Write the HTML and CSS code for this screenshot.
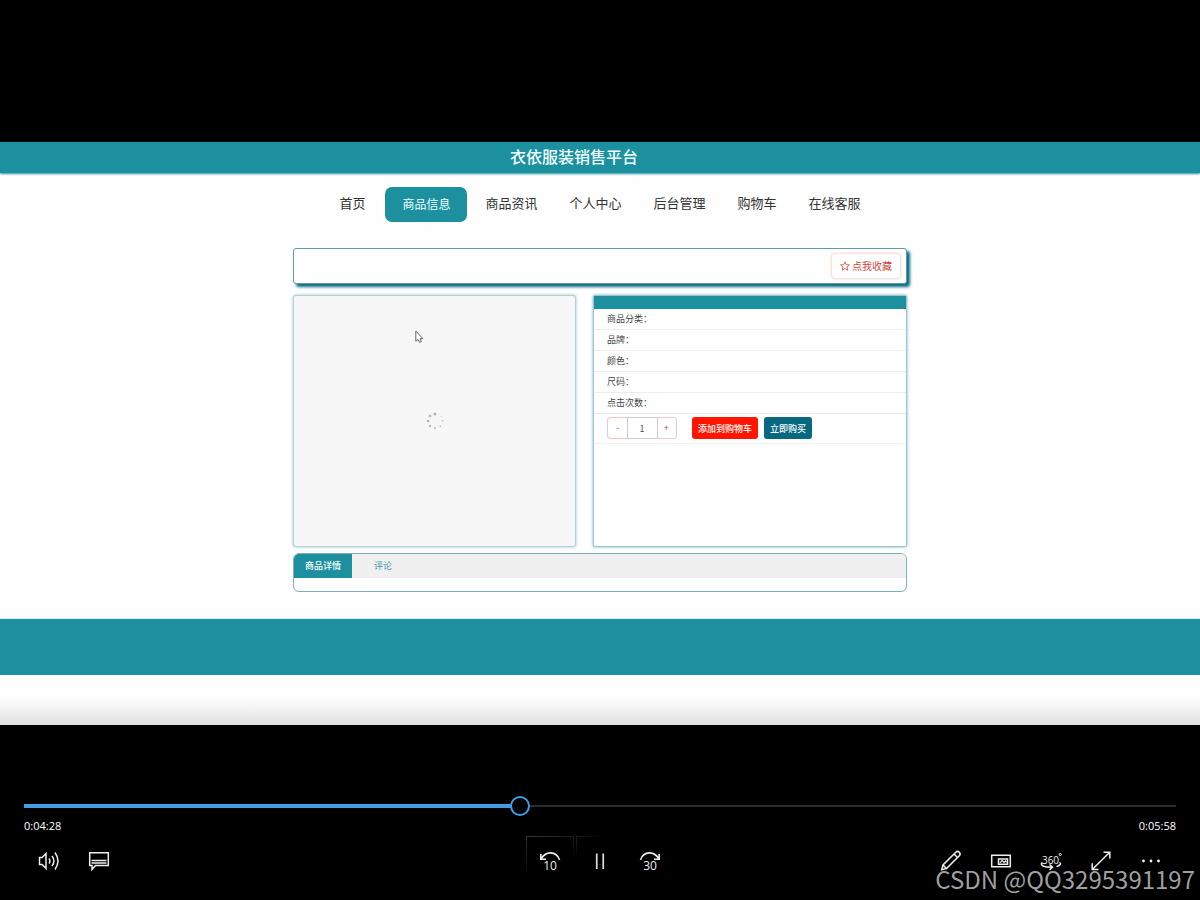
FILE: index.html
```html
<!DOCTYPE html>
<html lang="zh-CN">
<head>
<meta charset="utf-8">
<title>衣依服装销售平台</title>
<link rel="stylesheet" href="styles.css">
</head>
<body>
<main class="video">
  <header class="banner"><h1 class="banner-title">衣依服装销售平台</h1></header>
  <nav class="nav">
    <a class="nav-link" href="#">首页</a>
    <a class="nav-link nav-active" href="#">商品信息</a>
    <a class="nav-link" href="#">商品资讯</a>
    <a class="nav-link" href="#">个人中心</a>
    <a class="nav-link" href="#">后台管理</a>
    <a class="nav-link" href="#">购物车</a>
    <a class="nav-link" href="#">在线客服</a>
  </nav>
  <div class="container">
    <section class="title-bar">
      <button class="favorite" type="button">
        <svg class="star" viewBox="0 0 12 12" width="10" height="10"><path d="M6 .9 7.5 4.4 11.3 4.7 8.4 7.2 9.3 11 6 9 2.7 11 3.6 7.2 .7 4.7 4.5 4.4Z" fill="none" stroke="currentColor" stroke-width="1"/></svg>点我收藏
      </button>
    </section>
    <div class="product">
      <section class="gallery">
        <svg class="spinner" viewBox="0 0 18 18" width="18" height="18" fill="#b4b4b4">
          <circle cx="9" cy="2" r="1.5"/><circle cx="4" cy="4.1" r="1.4"/><circle cx="2" cy="9" r="1.3"/><circle cx="4" cy="14" r="1.2"/><circle cx="9" cy="16" r="1"/><circle cx="14.3" cy="14.2" r=".8"/><circle cx="16.6" cy="9" r=".7"/><circle cx="15" cy="4.4" r=".5"/>
        </svg>
        <svg class="cursor" viewBox="0 0 9 14" width="9" height="14"><path d="M.8 1v10.3l2.3-1.9L4.5 12.4 6.3 11.7 5.1 8.7H7.9Z" fill="#fff" stroke="#555" stroke-width=".9"/></svg>
      </section>
      <section class="info">
        <div class="info-head"></div>
        <div class="info-row">商品分类：</div>
        <div class="info-row">品牌：</div>
        <div class="info-row">颜色：</div>
        <div class="info-row">尺码：</div>
        <div class="info-row">点击次数：</div>
        <div class="buy-row">
          <div class="stepper">
            <button class="step" type="button">-</button>
            <input class="quantity" type="text" value="1" aria-label="数量">
            <button class="step" type="button">+</button>
          </div>
          <button class="action add-cart" type="button">添加到购物车</button>
          <button class="action buy-now" type="button">立即购买</button>
        </div>
      </section>
    </div>
    <section class="details">
      <div class="tabs">
        <button class="tab tab-active" type="button">商品详情</button>
        <button class="tab" type="button">评论</button>
      </div>
    </section>
  </div>
  <footer class="footer"></footer>
  <div class="fade"></div>
</main>
<section class="player">
  <input class="seek" type="range" min="0" max="1000" value="429" aria-label="播放进度">
  <div class="times"><span>0:04:28</span><span>0:05:58</span></div>
  <div class="controls">
    <div class="group">
      <button class="control" type="button" aria-label="音量">
        <svg viewBox="0 0 24 24" width="24" height="24" fill="none" stroke="#eee" stroke-width="1.5"><path d="M2.500 9.500H5L9 5.500V20.500L5 16.500H2.500Z"/><path d="M12 10.500q1.800 2.500 0 5M15 8q3.800 5 0 10M18 4.500q6 8.500 0 17"/></svg>
      </button>
      <button class="control" type="button" aria-label="字幕">
        <svg viewBox="0 0 24 24" width="24" height="24" fill="none" stroke="#eee" stroke-width="1.5"><path d="M2.700 4.700H21.300V17.500H8.500L5 21.500V17.500H2.700Z"/><path d="M4.500 12.500H19.500M4.500 15H19.500"/></svg>
      </button>
    </div>
    <div class="group">
      <button class="control outlined" type="button" aria-label="后退10秒">
        <svg viewBox="0 0 24 24" width="24" height="24" fill="none" stroke="#eee" stroke-width="1.600"><path d="M2.800 6V11.200H8M3 10.900Q7 4.800 12.500 4.900Q19.500 5.200 21.500 12"/><text class="skip-text" x="12" y="22">10</text></svg>
      </button>
      <button class="control outlined-faint" type="button" aria-label="暂停">
        <svg viewBox="0 0 24 24" width="24" height="24" fill="none" stroke="#ddd" stroke-width="1.700"><path d="M8.750 5.500V21M15.250 5.500V21"/></svg>
      </button>
      <button class="control" type="button" aria-label="前进30秒">
        <svg viewBox="0 0 24 24" width="24" height="24" fill="none" stroke="#eee" stroke-width="1.600"><path d="M21.200 6V11.200H16M21 10.900Q17 4.800 11.500 4.900Q4.500 5.200 2.500 12"/><text class="skip-text" x="12" y="22">30</text></svg>
      </button>
    </div>
    <div class="group group-end">
      <button class="control" type="button" aria-label="编辑">
        <svg viewBox="0 0 24 24" width="24" height="24" fill="none" stroke="#eee" stroke-width="1.500"><path d="M2.700 21.800 4 17 16.800 4.200Q18.500 2.500 20.300 4.200Q22 6 20.300 7.700L7.500 20.500ZM4 17 7.500 20.500M15 6 18.500 9.500"/></svg>
      </button>
      <button class="control" type="button" aria-label="迷你视图">
        <svg viewBox="0 0 24 24" width="24" height="24" fill="none" stroke="#eee" stroke-width="1.500"><path d="M2.700 7.200H21.300V18.800H2.700Z"/><path d="M9.500 11H18.500V16.200H9.500Z"/><path stroke-width="1.200" d="M11 15 13 12.500 15 14.500 16.500 13 17.500 14.500"/></svg>
      </button>
      <button class="control" type="button" aria-label="360度">
        <svg viewBox="0 0 24 24" width="24" height="24" fill="none" stroke="#eee" stroke-width="1.500"><text class="degree-text" x="11.500" y="15.500">360</text><circle cx="21.200" cy="6.500" r="1.100" stroke-width=".9"/><path d="M3.500 14.500Q1 16 4 18Q7 19.500 13.500 19.300M10.500 16.500 13.500 19.300 10.500 22M20.500 14.500Q23.500 16.500 17.500 18.600"/></svg>
      </button>
      <button class="control" type="button" aria-label="全屏">
        <svg viewBox="0 0 24 24" width="24" height="24" fill="none" stroke="#eee" stroke-width="1.500"><path d="M3.500 21.300 20.500 4.500M14.500 4.300H20.800V10.600M3.200 15.300V21.600H9.500"/></svg>
      </button>
      <button class="control" type="button" aria-label="更多">
        <svg viewBox="0 0 24 24" width="24" height="24" fill="#eee"><circle cx="4.500" cy="13" r="1.400"/><circle cx="12" cy="13" r="1.400"/><circle cx="19.500" cy="13" r="1.400"/></svg>
      </button>
    </div>
  </div>
</section>
<div class="watermark">CSDN @QQ3295391197</div>
</body>
</html>
```

FILE: styles.css
```css
* { box-sizing: border-box; }

body {
  position: relative;
  margin: 0;
  padding-top: 142px;
  min-height: 100vh;
  background: #000;
  font-family: "Noto Sans CJK SC", sans-serif;
}

button, input { font-family: inherit; margin: 0; }

button { padding: 0; border: 0; background: none; cursor: pointer; }

.video { background: #fefefe; }

.banner {
  padding: 0 52px 2px 0;
  background: #1c909f;
  box-shadow: 0 1px 2px #1c909f;
}

.banner-title {
  margin: 0;
  color: #f0ffff;
  font-size: 16px;
  font-weight: 500;
  line-height: 29px;
  text-align: center;
}

.nav {
  display: flex;
  justify-content: center;
  padding: 14px 0 26px;
}

.nav-link {
  padding: 0 16px;
  color: #333;
  font-size: 13px;
  line-height: 32px;
}

.nav-link { text-decoration: none; }

.nav-active {
  margin: 0 2px 0 4px;
  padding: 0 17px 2px;
  border-radius: 7px;
  background: #1c909f;
  color: #f0ffff;
  font-size: 12px;
  line-height: 33px;
}

.container {
  max-width: 614px;
  margin: 0 auto;
}

.title-bar {
  display: flex;
  justify-content: flex-end;
  padding: 4px 5px;
  border: 1px solid #5f9ca6;
  border-radius: 3px;
  background: #fff;
  box-shadow: 3px 3px 3px #086a83;
}

.favorite {
  display: flex;
  align-items: center;
  gap: 2px;
  padding: 0 8px;
  border: 1px solid #fbe0de;
  border-radius: 4px;
  box-shadow: 0 0 2px #f8cbc8;
  color: #cb4a3f;
  font-size: 10px;
  line-height: 24px;
}

.product {
  display: grid;
  grid-template-columns: 283fr 314fr;
  gap: 17px;
  min-height: 252px;
  margin: 11px 0 6px;
}

.gallery {
  position: relative;
  display: flex;
  align-items: center;
  justify-content: center;
  border: 1px solid #b4d0d5;
  border-radius: 3px;
  background: #f7f7f7;
  box-shadow: 0 0 3px #8fc3cb;
}

.cursor {
  position: absolute;
  top: 34px;
  left: 121px;
}

.info {
  border: 1px solid #9fc5cb;
  border-radius: 2px;
  background: #fff;
  box-shadow: 0 0 3px #6fb0ba;
}

.info-head { height: 13px; background: #1c909f; }

.info-row {
  padding-left: 13px;
  border-bottom: 1px solid #ededed;
  color: #444;
  font-size: 9px;
  line-height: 20px;
}

.buy-row {
  display: flex;
  padding: 3px 13px 4px;
  border-bottom: 1px solid #f2f2f2;
}

.stepper {
  display: flex;
  width: 70px;
  margin-right: 15px;
  border: 1px solid #ecc8c8;
  border-radius: 3px;
}

.step {
  flex: 1;
  color: #cc4050;
  font-size: 9px;
  line-height: 20px;
}

.quantity {
  width: 29px;
  height: 20px;
  padding: 0;
  border: 0;
  outline: 1px solid #ccc;
  color: #555;
  font-size: 9px;
  text-align: center;
}

.action {
  padding: 0 6px;
  border-radius: 3px;
  color: #fff;
  font-size: 9px;
  font-weight: 500;
  line-height: 21px;
}

.add-cart { margin-right: 6px; background: #ff1600; }

.buy-now { background: #08687f; }

.details {
  overflow: hidden;
  padding-bottom: 13px;
  border: 1px solid #7db0b8;
  border-radius: 6px;
  background: #fff;
}

.tabs { display: flex; background: #f0f0f0; }

.tab {
  padding: 0 11px;
  color: #3c97a3;
  font-size: 9px;
  line-height: 24px;
}

.tab + .tab { margin-left: 11px; }

.tab-active { background: #1c909f; color: #fff; font-weight: 500; }

.footer {
  height: 56px;
  margin-top: 27px;
  background: #1c909f;
  box-shadow: 0 0 1px #1c909f;
}

.fade {
  height: 50px;
  background: linear-gradient(#fefefe 46%, #e0e0e0);
}

.player { padding: 71px 24px 16px; }

.seek {
  display: block;
  width: 100%;
  height: 20px;
  background: none;
  appearance: none;
}

.seek::-webkit-slider-runnable-track {
  height: 20px;
  background:
    linear-gradient(#429ce3, #429ce3) left center / 43% 4px no-repeat,
    linear-gradient(#2b2b2b, #2b2b2b) left center / 100% 2px no-repeat;
}

.seek::-webkit-slider-thumb {
  width: 20px;
  height: 20px;
  border: 2px solid #429ce3;
  border-radius: 50%;
  background: #000;
  appearance: none;
}

.times {
  display: flex;
  justify-content: space-between;
  padding: 2px 0;
  color: #fff;
  font-family: "Open Sans", sans-serif;
  font-size: 11px;
  line-height: 16px;
}

.controls {
  display: grid;
  grid-template-columns: 1fr auto 1fr;
}

.group { display: flex; gap: 2px; padding-left: 1px; }

.group + .group { padding-left: 0; }

.group-end { justify-content: flex-end; padding-right: 1px; }

.control {
  display: flex;
  align-items: center;
  justify-content: center;
  width: 48px;
  height: 48px;
}

.outlined,
.outlined-faint {
  border: 1px solid transparent;
  border-image: linear-gradient(160deg, #333, transparent 60%) 1;
}

.outlined-faint { border-image: linear-gradient(135deg, #222, transparent 25%) 1; }

.skip-text,
.degree-text {
  fill: #eee;
  stroke: none;
  font-family: "Open Sans", sans-serif;
  font-size: 12px;
  text-anchor: middle;
}

.degree-text { font-size: 10px; }

.watermark {
  position: absolute;
  right: 5px;
  bottom: 3px;
  color: rgba(190, 190, 190, 0.85);
  font-size: 24px;
  line-height: 36px;
  pointer-events: none;
}
```
